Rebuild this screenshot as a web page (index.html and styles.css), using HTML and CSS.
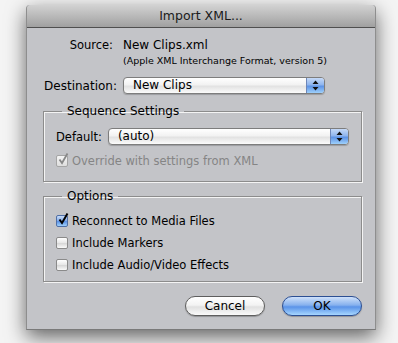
FILE: index.html
```html
<!DOCTYPE html>
<html lang="en">
<head>
    <meta charset="UTF-8">
    <title>Import XML...</title>
    <link rel="stylesheet" href="styles.css">
</head>
<body>
    <div class="window">
        <div class="titlebar">Import XML...</div>

        <div class="content">
            <div class="row source-row">
                <span class="label source-label">Source:</span>
                <span class="value">New Clips.xml</span>
            </div>
            <div class="subtitle">(Apple XML Interchange Format, version 5)</div>

            <div class="row dest-row">
                <span class="label dest-label">Destination:</span>
                <div class="popup dest-popup">
                    <span class="popup-text">New Clips</span>
                    <span class="popup-arrows">
                        <svg width="7" height="11" viewBox="0 0 7 11"><path d="M3.5 0.5 L6.5 4 L0.5 4 Z M3.5 10.5 L6.5 7 L0.5 7 Z" fill="#111"/></svg>
                    </span>
                </div>
            </div>

            <fieldset class="group seq-group">
                <legend>Sequence Settings</legend>
                <div class="row default-row">
                    <span class="label default-label">Default:</span>
                    <div class="popup default-popup">
                        <span class="popup-text">(auto)</span>
                        <span class="popup-arrows">
                            <svg width="7" height="11" viewBox="0 0 7 11"><path d="M3.5 0.5 L6.5 4 L0.5 4 Z M3.5 10.5 L6.5 7 L0.5 7 Z" fill="#111"/></svg>
                        </span>
                    </div>
                </div>
                <div class="check-row disabled override-row">
                    <span class="checkbox">
                        <svg width="12" height="13" viewBox="0 0 12 13"><path d="M2.5 6.5 L5 10 L10.5 0.5" fill="none" stroke="#888" stroke-width="1.8"/></svg>
                    </span>
                    <span>Override with settings from XML</span>
                </div>
            </fieldset>

            <fieldset class="group options-group">
                <legend>Options</legend>
                <div class="check-row">
                    <span class="checkbox checked">
                        <svg width="12" height="13" viewBox="0 0 12 13"><path d="M2.5 6.5 L5 10 L10.5 0.5" fill="none" stroke="#000" stroke-width="2"/></svg>
                    </span>
                    <span>Reconnect to Media Files</span>
                </div>
                <div class="check-row">
                    <span class="checkbox"></span>
                    <span>Include Markers</span>
                </div>
                <div class="check-row">
                    <span class="checkbox"></span>
                    <span>Include Audio/Video Effects</span>
                </div>
            </fieldset>

            <div class="buttons">
                <button class="button">Cancel</button>
                <button class="button default">OK</button>
            </div>
        </div>
    </div>
</body>
</html>
```

FILE: styles.css
```css
body {
    margin: 0;
    padding: 5px 22px 13px 26px;
    background: #f4f4f4;
    font-family: "Lucida Grande", "DejaVu Sans", sans-serif;
    font-size: 11.5px;
    color: #000;
}
.window {
    width: 350px;
    height: 325px;
    background: #c3c4c8;
    border-radius: 4px 4px 0 0;
    box-shadow: 0 7px 20px rgba(0,0,0,0.6);
    box-sizing: border-box;
    border-left: 1px solid #8e8e8e;
    border-right: 1px solid #8e8e8e;
    border-bottom: 1px solid #7a7a7a;
}
.titlebar {
    height: 22px;
    line-height: 22px;
    text-align: center;
    font-size: 12.5px;
    color: #1a1a1a;
    background: linear-gradient(#d2d2d2, #a0a0a0);
    border-bottom: 1px solid #4f4f4f;
    border-radius: 4px 4px 0 0;
}
.content {
    padding: 9px 13px 0 15px;
}
.row {
    display: flex;
    align-items: center;
}
.label {
    text-align: right;
    flex: none;
}
.source-row {
    height: 16px;
}
.source-label {
    width: 71px;
    margin-right: 10px;
}
.value {
    font-size: 12px;
}
.subtitle {
    height: 16px;
    line-height: 16px;
    font-size: 9.5px;
    padding-left: 81px;
}
.dest-row {
    margin-top: 8px;
    height: 17px;
}
.dest-label {
    width: 75px;
    margin-right: 6px;
    font-size: 12px;
}
.popup {
    display: flex;
    height: 17px;
    box-sizing: border-box;
    border: 1px solid #7d7d7d;
    border-radius: 4px;
    background: linear-gradient(#ffffff 0%, #f2f2f2 45%, #e2e2e2 55%, #fbfbfb 100%);
    box-shadow: 0 1px 1px rgba(0,0,0,0.2);
    overflow: hidden;
}
.dest-popup {
    width: 202px;
}
.popup-text {
    flex: 1;
    padding-left: 9px;
    line-height: 15px;
    font-size: 12px;
}
.popup-arrows {
    width: 17px;
    display: flex;
    align-items: center;
    justify-content: center;
    border-left: 1px solid #6d86b8;
    background: linear-gradient(#c5d9f7 0%, #8fb5ee 45%, #5d93e6 55%, #9ed0fb 100%);
}
.group {
    margin: 9px 0 0 1px;
    padding: 9px 12px 9px 12px;
    border: 1px solid #8c8c8c;
    box-shadow: 1px 1px 0 #f4f4f4, inset 1px 1px 0 #f4f4f4;
    width: 319px;
    box-sizing: border-box;
}
.group legend {
    margin-left: 6px;
    padding: 0 5px;
    line-height: 16px;
    font-size: 12px;
}
.default-row {
    height: 17px;
}
.default-label {
    margin-right: 6px;
    text-align: left;
    font-size: 11.5px;
}
.default-popup {
    flex: 1;
}
.check-row {
    display: flex;
    align-items: center;
    height: 22px;
}
.override-row {
    margin-top: 5px;
}
.check-row.disabled {
    color: #858585;
}
.checkbox {
    width: 12px;
    height: 12px;
    box-sizing: border-box;
    margin-right: 4px;
    border: 1px solid #8a8a8a;
    border-radius: 2px;
    background: linear-gradient(#ffffff, #e6e6e6 50%, #d8d8d8 55%, #fafafa);
    position: relative;
}
.checkbox svg {
    position: absolute;
    left: 0;
    top: -3px;
}
.checkbox.checked {
    border-color: #4f6fa6;
    background: linear-gradient(#c9dcf8, #86aeea 45%, #5c92e5 55%, #9fd0fb);
}
.disabled .checkbox {
    border-color: #a5a5a5;
    background: linear-gradient(#f4f4f4, #dedede);
}
.options-group {
    margin-top: 6px;
    padding-top: 6px;
    padding-bottom: 5px;
}
.buttons {
    display: flex;
    justify-content: flex-end;
    gap: 17px;
    margin-top: 14px;
}
.button {
    width: 80px;
    height: 20px;
    padding: 0;
    font-family: inherit;
    font-size: 12px;
    color: #000;
    border: 1px solid #5e5e5e;
    border-radius: 10px;
    background: linear-gradient(#ffffff 0%, #f3f3f3 45%, #e0e0e0 55%, #fafafa 100%);
    box-shadow: 0 1px 1px rgba(0,0,0,0.25);
}
.button.default {
    border-color: #2c4f93;
    background: linear-gradient(#cfe1fa 0%, #86b1ee 45%, #5a93e8 55%, #a6d6ff 100%);
}
```
